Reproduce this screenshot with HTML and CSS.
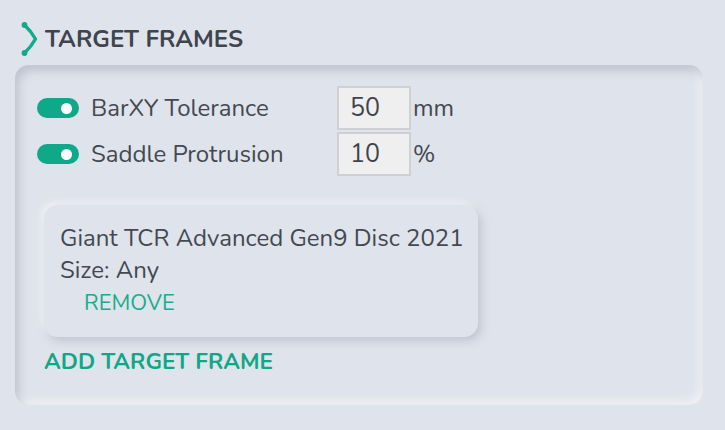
FILE: index.html
```html
<!DOCTYPE html>
<html>
<head>
<meta charset="utf-8">
<link rel="stylesheet" href="styles.css">
</head>
<body>
<div class="page">
  <div class="header">
    <svg class="chev" width="19" height="36" viewBox="0 0 19 36">
      <path d="M4.5 4 Q11 10 15.5 18 Q11 26 4.5 32" fill="none" stroke="#13a98b" stroke-width="3.4" stroke-linecap="round" stroke-linejoin="round"/>
      <circle cx="4.5" cy="4" r="2.9" fill="#13a98b"/>
      <circle cx="4.5" cy="32" r="2.9" fill="#13a98b"/>
    </svg>
    <h2 class="title">TARGET FRAMES</h2>
  </div>
  <div class="panel">
    <div class="settings">
      <div class="row">
        <span class="toggle"><span class="knob"></span></span>
        <span class="label">BarXY Tolerance</span>
        <span class="input">50</span>
        <span class="unit">mm</span>
      </div>
      <div class="row">
        <span class="toggle"><span class="knob"></span></span>
        <span class="label">Saddle Protrusion</span>
        <span class="input">10</span>
        <span class="unit">%</span>
      </div>
    </div>
    <div class="card">
      <div class="card-line">Giant TCR Advanced Gen9 Disc 2021</div>
      <div class="card-line">Size: Any</div>
      <div class="remove">REMOVE</div>
    </div>
    <div class="add">ADD TARGET FRAME</div>
  </div>
</div>
</body>
</html>
```
FILE: styles.css
```css
html, body {
  margin: 0;
  padding: 0;
  background: #dfe3eb;
}
body {
  font-family: "Nunito", "Lato", "Open Sans", sans-serif;
  color: #444851;
  width: 725px;
  height: 430px;
  overflow: hidden;
}
.page {
  padding: 21px 22px 0 15px;
}
.header {
  display: flex;
  align-items: center;
  padding-left: 5px;
  height: 36px;
}
.chev {
  flex: none;
  margin-right: 6px;
}
.title {
  margin: 0;
  font-size: 24px;
  font-weight: 700;
  color: #40444d;
}
.panel {
  margin-top: 8px;
  height: 340px;
  box-sizing: border-box;
  border-radius: 14px;
  background: #dfe3eb;
  box-shadow: inset 4px 6px 8px rgba(160,168,185,0.5), inset -4px -4px 8px rgba(255,255,255,0.55);
  padding: 21px 0 0 22px;
}
.settings {
  display: flex;
  flex-direction: column;
  gap: 2px;
}
.row {
  display: flex;
  align-items: center;
  height: 44px;
}
.toggle {
  width: 42px;
  height: 20px;
  border-radius: 10px;
  background: #0fa889;
  display: flex;
  align-items: center;
  justify-content: flex-end;
  padding-right: 7px;
  box-sizing: border-box;
  margin-right: 12px;
}
.knob {
  width: 11px;
  height: 11px;
  border-radius: 50%;
  background: #fff;
}
.label {
  font-size: 24px;
  width: 246px;
}
.input {
  width: 74px;
  height: 44px;
  box-sizing: border-box;
  border: 2px solid #cfd0d3;
  background: #efefef;
  font-size: 25px;
  padding-left: 11px;
  line-height: 40px;
  color: #3f434b;
}
.unit {
  font-size: 24px;
  margin-left: 2px;
}
.card {
  margin-top: 29px;
  margin-left: 7px;
  width: 434px;
  height: 132px;
  box-sizing: border-box;
  border-radius: 14px;
  background: #dfe3eb;
  box-shadow: 3px 4px 8px rgba(160,168,185,0.5), -3px -3px 7px rgba(255,255,255,0.6);
  padding: 17px 0 0 16px;
}
.card-line {
  font-size: 24px;
  line-height: 32px;
}
.remove {
  margin-top: 2px;
  margin-left: 24px;
  font-size: 22px;
  color: #19ad8d;
  line-height: 30px;
}
.add {
  margin-top: 9px;
  margin-left: 7px;
  font-size: 22.5px;
  font-weight: 700;
  color: #10a787;
}
```
